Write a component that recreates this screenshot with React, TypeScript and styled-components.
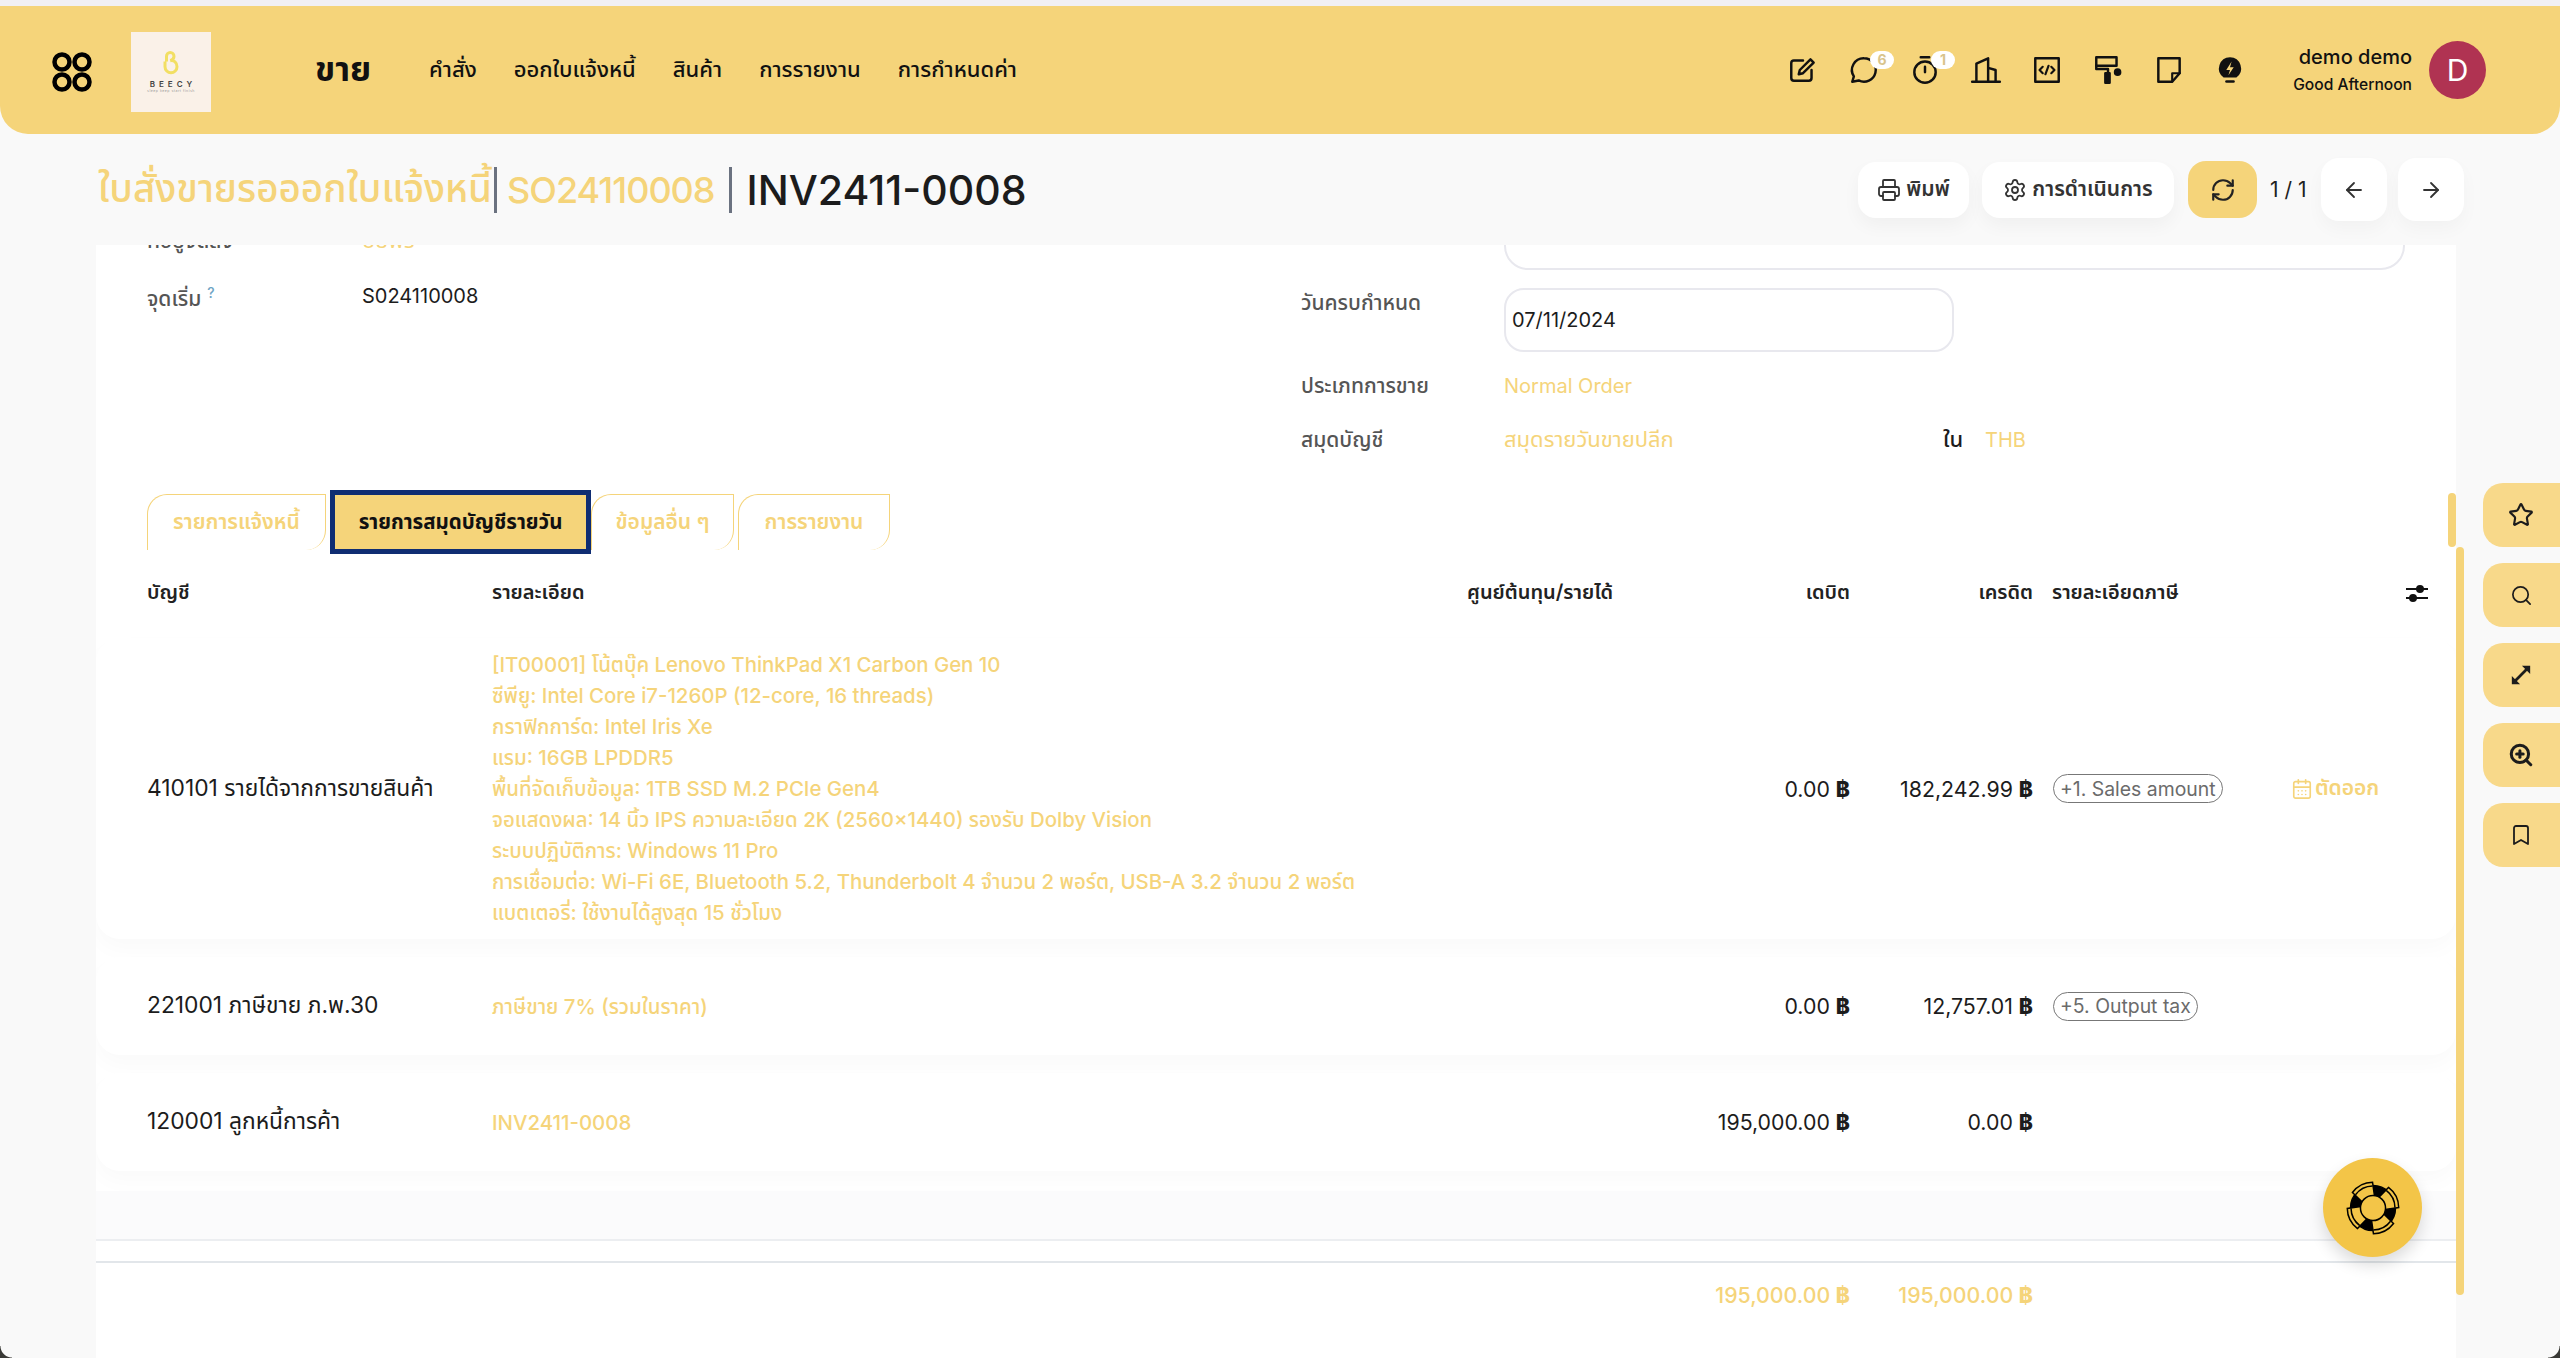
import React from "react";
import styled, { createGlobalStyle } from "styled-components";
import { Printer, Settings, RefreshCw, ArrowLeft, ArrowRight, CalendarDays, Star, Search, ZoomIn, Bookmark } from "lucide-react";

const GOLD = "#f5d47a";
const INK = "#1c1c1c";
const FONT = `"Inter", "Noto Sans", "Noto Sans Thai", "DejaVu Sans", sans-serif`;

const Global = createGlobalStyle`
  html, body { margin: 0; padding: 0; background: #f9f9f9; }
  * { box-sizing: border-box; }
  body { font-family: ${FONT}; color: ${INK}; }
`;

const Page = styled.div`
  position: relative;
  width: 2560px;
  height: 1358px;
  overflow: hidden;
  background: #f9f9f9;
  border-top: 6px solid #f1f0f4;
`;
const Navbar = styled.header`
  height: 128px;
  background: ${GOLD};
  border-radius: 0 0 28px 28px;
  display: flex;
  align-items: center;
  padding: 0 74px 0 51px;
`;
const AccountMark = styled.div`
  display: flex;
  margin-top: 4px;
`;
const Logo = styled.div`
  width: 80px;
  height: 80px;
  margin: 4px 0 0 38px;
  background: #faf1e8;
  display: flex;
  flex-direction: column;
  align-items: center;
  justify-content: center;
`;
const LogoWord = styled.span`
  font-size: 8px;
  font-weight: 600;
  letter-spacing: 4px;
  margin-right: -4px;
  color: #444;
  margin-top: 5px;
  line-height: 9px;
`;
const LogoTag = styled.span`
  font-size: 3.5px;
  color: #999;
  line-height: 5px;
  letter-spacing: 0.5px;
  white-space: nowrap;
`;
const AppName = styled.div`
  margin-left: 104px;
  font-size: 34px;
  font-weight: 700;
  color: #111;
`;
const Menu = styled.nav`
  margin-left: 58px;
  display: flex;
  gap: 37px;
`;
const MenuItem = styled.span`
  font-size: 22px;
  font-weight: 500;
  color: #111;
`;
const Tools = styled.div`
  margin-left: auto;
  display: flex;
`;
const ToolCell = styled.div`
  position: relative;
  width: 61px;
  height: 40px;
  display: flex;
  align-items: center;
  justify-content: center;
`;
const Badge = styled.span`
  position: absolute;
  left: 37px;
  top: 1px;
  width: 24px;
  height: 18px;
  border-radius: 9px;
  background: #fff;
  color: #d9c48c;
  font-size: 14px;
  font-weight: 700;
  text-align: center;
  line-height: 18px;
`;
const UserBlock = styled.div`
  width: 152px;
  text-align: right;
  display: flex;
  flex-direction: column;
  gap: 6px;
  color: #111;
`;
const UserName = styled.span`
  font-size: 20px;
  font-weight: 500;
  line-height: 24px;
`;
const Greeting = styled.span`
  font-size: 15.6px;
  font-weight: 500;
  line-height: 20px;
  white-space: nowrap;
`;
const Avatar = styled.div`
  width: 57px;
  height: 58px;
  margin-left: 17px;
  border-radius: 50%;
  background: #b03352;
  color: #fff;
  font-size: 30px;
  display: flex;
  align-items: center;
  justify-content: center;
`;
const TitleBar = styled.div`
  height: 111px;
  padding: 0 96px 0 98px;
  display: flex;
  align-items: center;
`;
const Crumb = styled.span<{ $size: number; $dark?: boolean; $track?: number }>`
  font-size: ${(p) => p.$size}px;
  font-weight: 500;
  letter-spacing: ${(p) => p.$track ?? 0}px;
  color: ${(p) => (p.$dark ? INK : GOLD)};
  white-space: nowrap;
`;
const Sep = styled.i<{ $l: number; $r: number }>`
  width: 3px;
  height: 46px;
  margin: 0 ${(p) => p.$r}px 0 ${(p) => p.$l}px;
  background: #6b7280;
`;
const Actions = styled.div`
  margin-left: auto;
  display: flex;
  align-items: center;
`;
const ActionBtn = styled.div<{ $w: number; $gap: number }>`
  width: ${(p) => p.$w}px;
  height: 56px;
  margin-right: ${(p) => p.$gap}px;
  background: #fff;
  border-radius: 18px;
  box-shadow: 0 8px 18px rgba(0, 0, 0, 0.04);
  display: flex;
  align-items: center;
  justify-content: center;
  gap: 5px;
  font-size: 21px;
  font-weight: 600;
  color: #333;
  white-space: nowrap;
`;
const RefreshBtn = styled.div`
  width: 69px;
  height: 57px;
  margin-right: 13px;
  background: ${GOLD};
  border-radius: 18px;
  display: flex;
  align-items: center;
  justify-content: center;
  color: #222;
`;
const Pager = styled.span`
  width: 39px;
  margin-right: 12px;
  font-size: 21px;
  white-space: nowrap;
  color: #222;
`;
const ArrowBtn = styled.div<{ $gap: number }>`
  width: 66px;
  height: 63px;
  margin-right: ${(p) => p.$gap}px;
  background: #fff;
  border-radius: 18px;
  box-shadow: 0 8px 18px rgba(0, 0, 0, 0.03);
  display: flex;
  align-items: center;
  justify-content: center;
  color: #333;
`;
const Panel = styled.main`
  width: 2360px;
  height: 1113px;
  margin-left: 96px;
  background: #fff;
  overflow: hidden;
`;
const Form = styled.section`
  height: 245px;
  display: flex;
`;
const FormLeft = styled.div`
  width: 1205px;
  padding-left: 51px;
  margin-top: -24px;
  display: flex;
  flex-direction: column;
  gap: 15px;
`;
const FormRight = styled.div`
  flex: 1;
  display: flex;
  flex-direction: column;
`;
const Field = styled.div<{ $top?: number; $start?: boolean }>`
  display: flex;
  align-items: ${(p) => (p.$start ? "flex-start" : "center")};
  min-height: 40px;
  margin-top: ${(p) => p.$top ?? 0}px;
  font-size: 20px;
`;
const Label = styled.span<{ $w: number }>`
  width: ${(p) => p.$w}px;
  flex: none;
  font-size: 21px;
  font-weight: 500;
  color: #555;
  line-height: 30px;
`;
const Help = styled.sup`
  margin-left: 6px;
  color: #6ea4c4;
  font-size: 14px;
`;
const Value = styled.span<{ $gold?: boolean; $w?: number; $strong?: boolean; $size?: number }>`
  color: ${(p) => (p.$gold ? GOLD : INK)};
  width: ${(p) => (p.$w ? `${p.$w}px` : "auto")};
  font-weight: ${(p) => (p.$strong ? 500 : 400)};
  font-size: ${(p) => p.$size ?? 20}px;
`;
const TopBox = styled.div`
  width: 901px;
  height: 100px;
  margin: -75px 0 18px 203px;
  border: 2px solid #e8e8ee;
  border-radius: 24px;
`;
const DateBox = styled.div`
  width: 450px;
  height: 64px;
  padding-left: 6px;
  border: 2px solid #e8e8ee;
  border-radius: 20px;
  display: flex;
  align-items: center;
  font-size: 20px;
`;
const Tabs = styled.div`
  height: 64px;
  padding-left: 51px;
  display: flex;
  align-items: center;
`;
const Tab = styled.div<{ $w: number; $gap?: number }>`
  width: ${(p) => p.$w}px;
  height: 56px;
  margin-right: ${(p) => p.$gap ?? 0}px;
  border: 1.5px solid ${GOLD};
  border-bottom: none;
  border-radius: 20px 0 20px 0;
  display: flex;
  align-items: center;
  justify-content: center;
  font-size: 21px;
  font-weight: 600;
  color: ${GOLD};
`;
const ActiveTab = styled.div`
  width: 261px;
  height: 64px;
  border: 5px solid #0f2d72;
  background: ${GOLD};
  display: flex;
  align-items: center;
  justify-content: center;
  font-size: 20.5px;
  font-weight: 700;
  color: #111;
`;
const grid = `
  display: grid;
  grid-template-columns: 345px 975px 144px 239px 183px 258px 1fr;
  align-items: center;
  padding-left: 51px;
`;
const TableHead = styled.div`
  ${grid}
  height: 78px;
  margin-bottom: 6px;
  font-size: 20px;
  font-weight: 600;
  color: #222;
`;
const Row = styled.div<{ $h: number; $gap?: number }>`
  ${grid}
  height: ${(p) => p.$h}px;
  margin-bottom: ${(p) => p.$gap ?? 18}px;
  border-radius: 24px;
  background: #fff;
  box-shadow: 0 10px 22px rgba(0, 0, 0, 0.025);
  font-size: 20px;
`;
const AccountCell = styled.div`
  font-size: 22.8px;
  white-space: nowrap;
`;
const Num = styled.div<{ $gold?: boolean }>`
  text-align: right;
  white-space: nowrap;
  font-size: 21.3px;
  color: ${(p) => (p.$gold ? GOLD : INK)};
  font-weight: ${(p) => (p.$gold ? 500 : 400)};
`;
const Baht = styled.b`
  font-weight: 800;
`;
const Head = styled.div<{ $right?: boolean; $pad?: number }>`
  text-align: ${(p) => (p.$right ? "right" : "left")};
  padding-left: ${(p) => p.$pad ?? 0}px;
  white-space: nowrap;
`;
const Detail = styled.div`
  color: ${GOLD};
  font-size: 20.4px;
  font-weight: 500;
  line-height: 31px;
  white-space: nowrap;
`;
const TaxCell = styled.div`
  padding-left: 20px;
`;
const TaxTag = styled.span`
  display: inline-flex;
  align-items: center;
  height: 29px;
  padding: 0 6px;
  border: 1.5px solid #777;
  border-radius: 15px;
  color: #6b6b6b;
  font-size: 19.4px;
  white-space: nowrap;
`;
const Reconcile = styled.div`
  display: flex;
  align-items: center;
  gap: 2px;
  font-size: 21px;
  color: ${GOLD};
  font-weight: 600;
`;
const HeadIcon = styled.div`
  display: flex;
  justify-content: flex-start;
  padding-left: 114px;
`;
const Stripe = styled.div`
  height: 50px;
  margin-top: 20px;
  background: #fbfbfc;
  border-bottom: 2px solid #eceef1;
`;
const Gap = styled.div`
  height: 22px;
  border-bottom: 2px solid #e2e6ea;
`;
const Totals = styled.div`
  ${grid}
  height: 64px;
`;
const Thumb = styled.i<{ $x: number; $y: number; $h: number }>`
  position: absolute;
  left: ${(p) => p.$x}px;
  top: ${(p) => p.$y}px;
  width: 8px;
  height: ${(p) => p.$h}px;
  border-radius: 4px;
  background: ${GOLD};
`;
const SideRail = styled.aside`
  position: absolute;
  right: 0;
  top: 477px;
  display: flex;
  flex-direction: column;
  gap: 16px;
`;
const SideBtn = styled.div`
  width: 77px;
  height: 64px;
  padding-right: 1px;
  background: #f8d98a;
  border-radius: 20px 0 0 20px;
  display: flex;
  align-items: center;
  justify-content: center;
  color: #1c1c1c;
`;
const Fab = styled.div`
  position: absolute;
  left: 2323px;
  top: 1152px;
  width: 99px;
  height: 99px;
  border-radius: 50%;
  background: #f3c548;
  box-shadow: 0 8px 16px rgba(0, 0, 0, 0.14);
  display: flex;
  align-items: center;
  justify-content: center;
`;
const Corner = styled.i<{ $right?: boolean }>`
  position: absolute;
  bottom: 0;
  ${(p) => (p.$right ? "right: 0;" : "left: 0;")}
  width: 12px;
  height: 12px;
  background: radial-gradient(circle at ${(p) => (p.$right ? "0 0" : "100% 0")}, transparent 11px, #3a3a36 12px);
`;

const Ico = ({ children, w = 32 }: { children: React.ReactNode; w?: number }) => (
  <svg width={w} height={w} viewBox="0 0 30 30" fill="none" stroke="#111" strokeWidth={2.3} strokeLinecap="round" strokeLinejoin="round">
    {children}
  </svg>
);

const Account = (
  <svg width="42" height="40" viewBox="0 0 42 40" fill="none" stroke="#000" strokeWidth="4.5">
    <circle cx="11" cy="10" r="7.5" />
    <circle cx="31" cy="10" r="7.5" />
    <circle cx="11" cy="30" r="7.5" />
    <circle cx="31" cy="30" r="7.5" />
  </svg>
);

const LogoMark = (
  <svg width="16" height="24" viewBox="0 0 20 32" fill="none" stroke="#f2df63" strokeWidth="4">
    <path d="M4 14V7a5 5 0 0 1 10 0c0 3-2 5-5 6 5-1 9 2 9 8a8 8 0 0 1-16 0v-7" />
  </svg>
);

const polar = (r: number, deg: number) => {
  const a = (deg * Math.PI) / 180;
  return `${(28 + r * Math.cos(a)).toFixed(2)} ${(28 + r * Math.sin(a)).toFixed(2)}`;
};
const bandPath = (deg: number, rOut: number, half: number) =>
  `M${polar(11.5, deg - half - 8)}L${polar(rOut, deg - half)}A${rOut} ${rOut} 0 0 1 ${polar(rOut, deg + half)}L${polar(11.5, deg + half + 8)}Z`;

const Lifebuoy = (
  <svg width="60" height="60" viewBox="0 0 56 56" fill="none" stroke="#000" strokeWidth="1.4">
    <circle cx="28" cy="28" r="21" fill="#000" />
    {[-27, 63, 153, 243].map((deg) => (
      <g key={deg}>
        <path d={bandPath(deg, 24, 26)} fill="#f3c548" />
        <path d={`M${polar(20.5, deg - 26)}A20.500 20.500 0 0 1 ${polar(20.5, deg + 26)}`} />
      </g>
    ))}
    <circle cx="28" cy="28" r="11.700" fill="#f3c548" />
  </svg>
);

const Sliders = (
  <svg width="24" height="20" viewBox="0 0 24 20" fill="none" stroke="#111" strokeWidth="2">
    <path d="M1 6h22M1 15h22" />
    <circle cx="15" cy="6" r="3" fill="#111" />
    <circle cx="8" cy="15" r="3" fill="#111" />
  </svg>
);

const tools: { key: string; badge?: string; icon: React.ReactNode }[] = [
  { key: "edit", icon: <Ico><path d="M15 6H6.5A2.5 2.5 0 0 0 4 8.5v14A2.5 2.5 0 0 0 6.5 25h14a2.5 2.5 0 0 0 2.500-2.500V15" /><path d="M11 19l1-4L22 5l3 3-10 10z" /></Ico> },
  { key: "chat", badge: "6", icon: <Ico><path d="M15 4a11 11 0 1 1-5 20.800L4 26l1.500-5A11 11 0 0 1 15 4z" /></Ico> },
  { key: "timer", badge: "1", icon: <Ico><path d="M11 3h8M15 12v5" /><circle cx="15" cy="17" r="10" /></Ico> },
  { key: "office", icon: <Ico><path d="M2 26h26M6 26V9l11-5v22M17 13l7 2v11" /></Ico> },
  { key: "code", icon: <Ico><rect x="4" y="4" width="22" height="22" /><path d="M11 12l-3 3 3 3M19 12l3 3-3 3M16.500 11l-3 8" strokeWidth="2" /></Ico> },
  { key: "roller", icon: <Ico><rect x="4" y="3" width="19" height="8" /><path d="M4 11v3h11v4" /><rect x="12.500" y="18" width="4" height="9" fill="#111" /><circle cx="24" cy="17" r="2.400" fill="#111" /></Ico> },
  { key: "note", icon: <Ico><path d="M5 4h20v14l-7 8H5z" /><path d="M25 18h-7v8" strokeWidth="2" /></Ico> },
  { key: "bulb", icon: <svg width="32" height="32" viewBox="0 0 30 30"><path d="M15 3a10.500 10.500 0 0 0-6 19h12a10.500 10.500 0 0 0-6-19z" fill="#111" /><path d="M16.500 7l-5 8h3.500l-1.500 5 5-7.500h-3.500z" fill="#f5d47a" /><rect x="10.500" y="24.500" width="9" height="2.500" rx="1.200" fill="#111" /></svg> },
];

const details = [
  "[IT00001] โน้ตบุ๊ค Lenovo ThinkPad X1 Carbon Gen 10",
  "ซีพียู: Intel Core i7-1260P (12-core, 16 threads)",
  "กราฟิกการ์ด: Intel Iris Xe",
  "แรม: 16GB LPDDR5",
  "พื้นที่จัดเก็บข้อมูล: 1TB SSD M.2 PCIe Gen4",
  "จอแสดงผล: 14 นิ้ว IPS ความละเอียด 2K (2560x1440) รองรับ Dolby Vision",
  "ระบบปฏิบัติการ: Windows 11 Pro",
  "การเชื่อมต่อ: Wi-Fi 6E, Bluetooth 5.2, Thunderbolt 4 จำนวน 2 พอร์ต, USB-A 3.2 จำนวน 2 พอร์ต",
  "แบตเตอรี่: ใช้งานได้สูงสุด 15 ชั่วโมง",
];

const menu = ["คำสั่ง", "ออกใบแจ้งหนี้", "สินค้า", "การรายงาน", "การกำหนดค่า"];

const Amount = ({ v, gold }: { v: string; gold?: boolean }) => (
  <Num $gold={gold}>
    {v} <Baht>฿</Baht>
  </Num>
);

export default function App() {
  return (
    <Page>
      <Global />
      <Navbar>
        <AccountMark>{Account}</AccountMark>
        <Logo>
          {LogoMark}
          <LogoWord>BEECY</LogoWord>
          <LogoTag>sleep keep start finish</LogoTag>
        </Logo>
        <AppName>ขาย</AppName>
        <Menu>
          {menu.map((m) => (
            <MenuItem key={m}>{m}</MenuItem>
          ))}
        </Menu>
        <Tools>
          {tools.map((t) => (
            <ToolCell key={t.key}>
              {t.icon}
              {t.badge && <Badge>{t.badge}</Badge>}
            </ToolCell>
          ))}
        </Tools>
        <UserBlock>
          <UserName>demo demo</UserName>
          <Greeting>Good Afternoon</Greeting>
        </UserBlock>
        <Avatar>D</Avatar>
      </Navbar>

      <TitleBar>
        <Crumb $size={38.5}>ใบสั่งขายรอออกใบแจ้งหนี้</Crumb>
        <Sep $l={2} $r={10} />
        <Crumb $size={36} $track={-1}>SO24110008</Crumb>
        <Sep $l={14} $r={15} />
        <Crumb $size={41} $dark>INV2411-0008</Crumb>
        <Actions>
          <ActionBtn $w={111} $gap={13}>
            <Printer size={24} strokeWidth={1.8} />
            พิมพ์
          </ActionBtn>
          <ActionBtn $w={192} $gap={14}>
            <Settings size={24} strokeWidth={1.8} />
            การดำเนินการ
          </ActionBtn>
          <RefreshBtn>
            <RefreshCw size={26} strokeWidth={2} />
          </RefreshBtn>
          <Pager>1 / 1</Pager>
          <ArrowBtn $gap={11}>
            <ArrowLeft size={24} strokeWidth={1.8} />
          </ArrowBtn>
          <ArrowBtn $gap={0}>
            <ArrowRight size={24} strokeWidth={1.8} />
          </ArrowBtn>
        </Actions>
      </TitleBar>

      <Panel>
        <Form>
          <FormLeft>
            <Field>
              <Label $w={215}>ที่อยู่จัดส่ง</Label>
              <Value $gold $size={22}>ปิยพร</Value>
            </Field>
            <Field>
              <Label $w={215}>
                จุดเริ่ม<Help>?</Help>
              </Label>
              <Value>S024110008</Value>
            </Field>
          </FormLeft>
          <FormRight>
            <TopBox />
            <Field $start>
              <Label $w={203}>วันครบกำหนด</Label>
              <DateBox>07/11/2024</DateBox>
            </Field>
            <Field $top={14}>
              <Label $w={203}>ประเภทการขาย</Label>
              <Value $gold>Normal Order</Value>
            </Field>
            <Field $top={14}>
              <Label $w={203}>สมุดบัญชี</Label>
              <Value $gold $w={439} $size={22}>สมุดรายวันขายปลีก</Value>
              <Value $w={42} $strong $size={22}>ใน</Value>
              <Value $gold>THB</Value>
            </Field>
          </FormRight>
        </Form>

        <Tabs>
          <Tab $w={179} $gap={4}>รายการแจ้งหนี้</Tab>
          <ActiveTab>รายการสมุดบัญชีรายวัน</ActiveTab>
          <Tab $w={143} $gap={4}>ข้อมูลอื่น ๆ</Tab>
          <Tab $w={152}>การรายงาน</Tab>
        </Tabs>

        <TableHead>
          <Head>บัญชี</Head>
          <Head>รายละเอียด</Head>
          <Head>ศูนย์ต้นทุน/รายได้</Head>
          <Head $right>เดบิต</Head>
          <Head $right>เครดิต</Head>
          <Head $pad={19}>รายละเอียดภาษี</Head>
          <HeadIcon>{Sliders}</HeadIcon>
        </TableHead>

        <Row $h={301}>
          <AccountCell>410101 รายได้จากการขายสินค้า</AccountCell>
          <div>
            {details.map((d) => (
              <Detail key={d}>{d}</Detail>
            ))}
          </div>
          <div />
          <Amount v="0.00" />
          <Amount v="182,242.99" />
          <TaxCell>
            <TaxTag>+1. Sales amount</TaxTag>
          </TaxCell>
          <Reconcile>
            <CalendarDays size={22} strokeWidth={1.8} />
            ตัดออก
          </Reconcile>
        </Row>
        <Row $h={98}>
          <AccountCell>221001 ภาษีขาย ภ.พ.30</AccountCell>
          <Detail>ภาษีขาย 7% (รวมในราคา)</Detail>
          <div />
          <Amount v="0.00" />
          <Amount v="12,757.01" />
          <TaxCell>
            <TaxTag>+5. Output tax</TaxTag>
          </TaxCell>
          <div />
        </Row>
        <Row $h={98} $gap={0}>
          <AccountCell>120001 ลูกหนี้การค้า</AccountCell>
          <Detail>INV2411-0008</Detail>
          <div />
          <Amount v="195,000.00" />
          <Amount v="0.00" />
          <div />
          <div />
        </Row>
        <Stripe />
        <Gap />
        <Totals>
          <div />
          <div />
          <div />
          <Amount v="195,000.00" gold />
          <Amount v="195,000.00" gold />
          <div />
          <div />
        </Totals>
      </Panel>

      <Thumb $x={2448} $y={487} $h={54} />
      <Thumb $x={2456} $y={541} $h={748} />

      <SideRail>
        <SideBtn><Star size={26} strokeWidth={2} /></SideBtn>
        <SideBtn><Search size={23} strokeWidth={1.8} /></SideBtn>
        <SideBtn>
          <svg width="22" height="22" viewBox="0 0 24 24" fill="none" stroke="#1c1c1c" strokeWidth="3">
            <path d="M5 19L19 5" />
            <path d="M13 2h9v9zM2 13v9h9z" fill="#1c1c1c" stroke="none" />
          </svg>
        </SideBtn>
        <SideBtn><ZoomIn size={26} strokeWidth={2.8} /></SideBtn>
        <SideBtn><Bookmark size={24} strokeWidth={1.8} /></SideBtn>
      </SideRail>

      <Fab>{Lifebuoy}</Fab>
      <Corner />
      <Corner $right />
    </Page>
  );
}
